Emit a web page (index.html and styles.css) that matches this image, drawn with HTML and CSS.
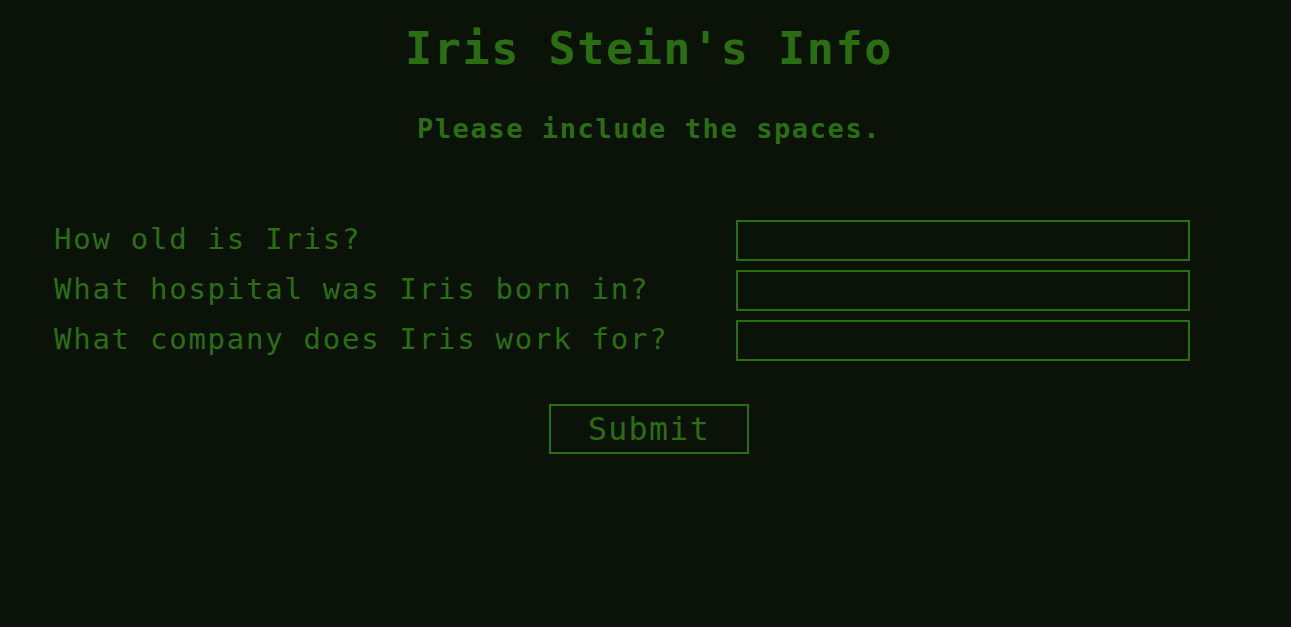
FILE: index.html
```html
<!DOCTYPE html>
<html lang="en">
<head>
<meta charset="utf-8">
<title>Iris Stein's Info</title>
<link rel="stylesheet" href="styles.css">
</head>
<body>
<main class="page">
  <header class="head">
    <h1 class="title">Iris Stein's Info</h1>
    <p class="note">Please include the spaces.</p>
  </header>
  <form class="quiz">
    <div class="fields">
      <label class="q" for="age">How old is Iris?</label>
      <input class="answer" id="age" type="text">
      <label class="q" for="hospital">What hospital was Iris born in?</label>
      <input class="answer" id="hospital" type="text">
      <label class="q" for="company">What company does Iris work for?</label>
      <input class="answer" id="company" type="text">
    </div>
    <div class="actions">
      <button class="submit" type="submit">Submit</button>
    </div>
  </form>
</main>
</body>
</html>
```
FILE: styles.css
```css
html, body {
  margin: 0;
  padding: 0;
  background: #0b1208;
}
body {
  font-family: "DejaVu Sans Mono", "Liberation Mono", monospace;
  color: #2b6e12;
  height: 627px;
}
.page {
  padding-top: 22px;
}
.head {
  text-align: center;
  padding-left: 7px;
}
.title {
  margin: 0;
  font-size: 45px;
  line-height: 54px;
  font-weight: bold;
  letter-spacing: 1.6px;
}
.note {
  margin: 36px 0 0;
  font-size: 27px;
  line-height: 34px;
  font-weight: bold;
  letter-spacing: 1.6px;
}
.quiz {
  margin-top: 69.5px;
}
.fields {
  display: grid;
  grid-template-columns: 682px 454px;
  grid-auto-rows: 50px;
  align-items: center;
  margin-left: 54px;
}
.q {
  font-size: 29px;
  line-height: 50px;
  letter-spacing: 1.74px;
  white-space: nowrap;
  margin-top: -3px;
}
.answer {
  box-sizing: border-box;
  height: 41px;
  width: 454px;
  margin: 0;
  border: 2px solid #2b6e12;
  background: transparent;
  color: #2b6e12;
  font: inherit;
  font-size: 24px;
  padding: 0 6px;
  outline: none;
}
.actions {
  display: flex;
  justify-content: center;
  padding-left: 7px;
  margin-top: 38.5px;
}
.submit {
  box-sizing: border-box;
  width: 200px;
  height: 50px;
  margin: 0;
  padding: 0;
  border: 2px solid #2b6e12;
  background: transparent;
  color: #2b6e12;
  font-family: "DejaVu Sans Mono", "Liberation Mono", monospace;
  font-size: 31.5px;
  line-height: 46px;
  letter-spacing: 1.4px;
  cursor: pointer;
}
```
